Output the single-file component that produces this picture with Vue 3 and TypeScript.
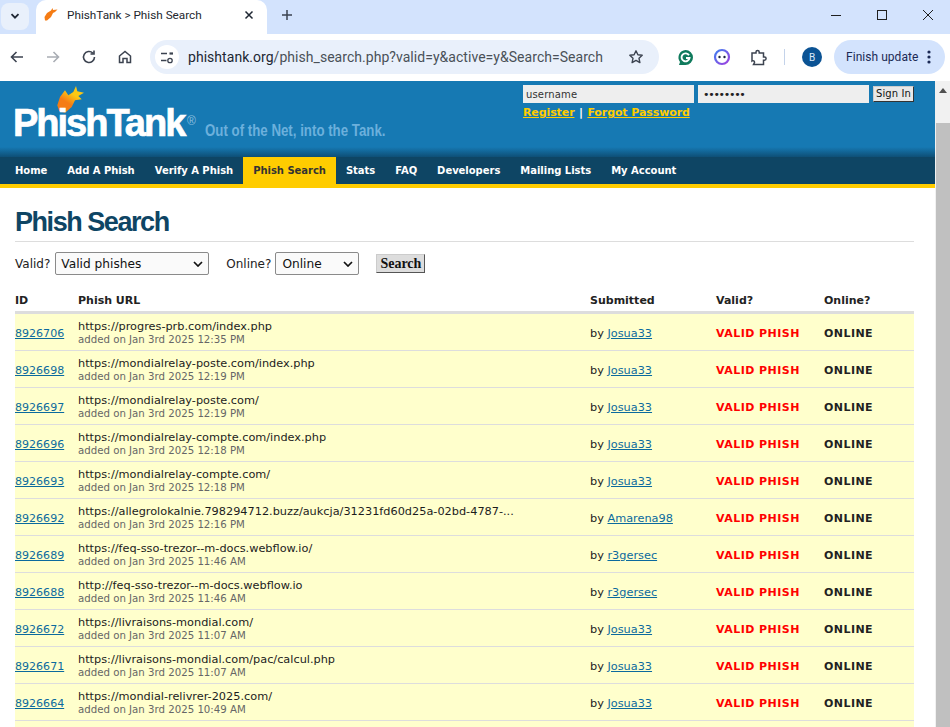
<script setup lang="ts">
interface Row { id: string; url: string; date: string; by: string }
const rows: Row[] = [
  { id: '8926706', url: 'https://progres-prb.com/index.php', date: 'Jan 3rd 2025 12:35 PM', by: 'Josua33' },
  { id: '8926698', url: 'https://mondialrelay-poste.com/index.php', date: 'Jan 3rd 2025 12:19 PM', by: 'Josua33' },
  { id: '8926697', url: 'https://mondialrelay-poste.com/', date: 'Jan 3rd 2025 12:19 PM', by: 'Josua33' },
  { id: '8926696', url: 'https://mondialrelay-compte.com/index.php', date: 'Jan 3rd 2025 12:18 PM', by: 'Josua33' },
  { id: '8926693', url: 'https://mondialrelay-compte.com/', date: 'Jan 3rd 2025 12:18 PM', by: 'Josua33' },
  { id: '8926692', url: 'https://allegrolokalnie.798294712.buzz/aukcja/31231fd60d25a-02bd-4787-...', date: 'Jan 3rd 2025 12:16 PM', by: 'Amarena98' },
  { id: '8926689', url: 'https://feq-sso-trezor--m-docs.webflow.io/', date: 'Jan 3rd 2025 11:46 AM', by: 'r3gersec' },
  { id: '8926688', url: 'http://feq-sso-trezor--m-docs.webflow.io', date: 'Jan 3rd 2025 11:46 AM', by: 'r3gersec' },
  { id: '8926672', url: 'https://livraisons-mondial.com/', date: 'Jan 3rd 2025 11:07 AM', by: 'Josua33' },
  { id: '8926671', url: 'https://livraisons-mondial.com/pac/calcul.php', date: 'Jan 3rd 2025 11:07 AM', by: 'Josua33' },
  { id: '8926664', url: 'https://mondial-relivrer-2025.com/', date: 'Jan 3rd 2025 10:49 AM', by: 'Josua33' }
]
const navItems: string[] = ['Home', 'Add A Phish', 'Verify A Phish', 'Phish Search', 'Stats', 'FAQ', 'Developers', 'Mailing Lists', 'My Account']
</script>

<template>
  <div class="window">
    <div class="tabstrip">
      <div class="tabmenu">
        <svg width="12" height="12" viewBox="0 0 12 12"><path d="M2.500 4.200 6 7.700l3.500-3.500" fill="none" stroke="#1f2733" stroke-width="1.800"/></svg>
      </div>
      <div class="tab">
        <svg class="favicon" width="15" height="15" viewBox="0 0 15 15"><path d="M1 13.500.5 10 3 6l4-2.500L8.500 1 9 3l4.500-.5L11 5 9 6l-2 4-4 3.500z" fill="#f57c14"/></svg>
        <span class="tabtitle">PhishTank &gt; Phish Search</span>
        <svg class="tabclose" width="10" height="10" viewBox="0 0 10 10"><path d="M1.500 1.500l7 7M8.500 1.500l-7 7" stroke="#1f2733" stroke-width="1.500"/></svg>
      </div>
      <svg class="newtab" width="12" height="12" viewBox="0 0 12 12"><path d="M6 1v10M1 6h10" stroke="#3b4350" stroke-width="1.500"/></svg>
      <div class="winctrls">
        <svg width="12" height="12" viewBox="0 0 12 12"><path d="M1 6.500h10" stroke="#1f1f1f" stroke-width="1"/></svg>
        <svg width="12" height="12" viewBox="0 0 12 12"><rect x="1.500" y="1.500" width="9" height="9" fill="none" stroke="#1f1f1f" stroke-width="1"/></svg>
        <svg width="12" height="12" viewBox="0 0 12 12"><path d="M1 1l10 10M11 1 1 11" stroke="#1f1f1f" stroke-width="1"/></svg>
      </div>
    </div>

    <div class="toolbar">
      <svg class="tool" width="16" height="16" viewBox="0 0 16 16"><path d="M14 8H3M7.500 3 2.500 8l5 5" fill="none" stroke="#3c4350" stroke-width="1.600"/></svg>
      <svg class="tool" width="16" height="16" viewBox="0 0 16 16"><path d="M2 8h11M8.500 3l5 5-5 5" fill="none" stroke="#a9adb4" stroke-width="1.600"/></svg>
      <svg class="tool" width="16" height="16" viewBox="0 0 16 16"><path d="M13.500 8A5.500 5.500 0 1 1 11.800 4M13 1.500V5H9.500" fill="none" stroke="#3c4350" stroke-width="1.600"/></svg>
      <svg class="tool" width="16" height="16" viewBox="0 0 16 16"><path d="M2.500 7 8 2.500 13.500 7v6.500h-3.500V9.500H6v4H2.500z" fill="none" stroke="#3c4350" stroke-width="1.500"/></svg>
      <div class="omnibox">
        <span class="tune">
          <svg width="14" height="14" viewBox="0 0 14 14"><path d="M1 3.500h6M1 10.500h5.500" stroke="#3c4350" stroke-width="1.400"/><path d="M9.500 3.500h3.500" stroke="#3c4350" stroke-width="2.200"/><circle cx="10" cy="10.500" r="2.200" fill="none" stroke="#3c4350" stroke-width="1.300"/></svg>
        </span>
        <span class="url"><span class="host">phishtank.org</span>/phish_search.php?valid=y&amp;active=y&amp;Search=Search</span>
        <svg class="star" width="16" height="16" viewBox="0 0 16 16"><path d="M8 1.800l1.900 4 4.300.5-3.200 3 .9 4.300L8 11.400l-3.900 2.200.9-4.300-3.200-3 4.300-.5z" fill="none" stroke="#3c4350" stroke-width="1.400" stroke-linejoin="round"/></svg>
      </div>
      <svg class="ext grammarly" width="17" height="17" viewBox="0 0 17 17"><path d="M8.500 1a7.500 7.500 0 1 1 0 15H2l1-3A7.500 7.500 0 0 1 8.500 1z" fill="#0f7a5c"/><path d="M12 6.300A4 4 0 1 0 12.500 9H9" fill="none" stroke="#fff" stroke-width="1.900"/></svg>
      <svg class="ext monica" width="18" height="18" viewBox="0 0 18 18"><defs><linearGradient id="mg" x1="0" y1="0" x2="1" y2="1"><stop offset="0" stop-color="#3f7ef0"/><stop offset="1" stop-color="#a03fe0"/></linearGradient></defs><circle cx="9" cy="9" r="7" fill="#fff" stroke="url(#mg)" stroke-width="2.200"/><circle cx="6.500" cy="9" r="1.200" fill="#1b2440"/><circle cx="11.500" cy="9" r="1.200" fill="#1b2440"/></svg>
      <svg class="ext puzzle" width="17" height="17" viewBox="0 0 17 17"><path d="M2 4h4V3a1.600 1.600 0 0 1 3.200 0v1h4.300v4h1a1.600 1.600 0 0 1 0 3.200h-1v4.300H3.500l1-2a1.600 1.600 0 0 0-2.500-1.500z" fill="none" stroke="#3c4350" stroke-width="1.500"/></svg>
      <span class="sep"></span>
      <span class="avatar">B</span>
      <div class="update">
        <span>Finish update</span>
        <svg width="4" height="14" viewBox="0 0 4 14"><circle cx="2" cy="2" r="1.600" fill="#1b2a55"/><circle cx="2" cy="7" r="1.600" fill="#1b2a55"/><circle cx="2" cy="12" r="1.600" fill="#1b2a55"/></svg>
      </div>
    </div>

    <div class="viewport">
      <div class="page">
        <header class="banner">
          <div class="logo">
            <svg class="fish" width="28" height="28" viewBox="0 0 28 28">
              <defs><linearGradient id="fg" x1="0.200" y1="0.900" x2="0.700" y2="0.100"><stop offset="0.350" stop-color="#f57c14"/><stop offset="0.750" stop-color="#fcc814"/></linearGradient></defs>
              <path d="M.3 20.300 3 12l5-6.700 3.300 5L16.300 7 19 1l1.300 5.300L27 7.700 21.300 11l3.400 3.300-6.700 1-3.300 6.700L8 27.700l-5.700-1.400z" fill="url(#fg)"/>
            </svg>
            <span class="wordmark">PhishTank</span><span class="reg">®</span>
            <span class="tagline">Out of the Net, into the Tank.</span>
          </div>
          <div class="login">
            <div class="loginrow">
              <span class="field">username</span>
              <span class="field dots">••••••••</span>
              <span class="signin">Sign In</span>
            </div>
            <div class="loginlinks"><a>Register</a><span class="pipe">|</span><a>Forgot Password</a></div>
          </div>
        </header>
        <nav class="nav">
          <span v-for="n in navItems" :key="n" class="navitem" :class="{ active: n === 'Phish Search' }">{{ n }}</span>
        </nav>
        <main class="content">
          <h1>Phish Search</h1>
          <div class="filters">
            <label class="flabel">Valid?</label>
            <span class="select sel1"><span class="seltext">Valid phishes</span><svg width="10" height="6" viewBox="0 0 10 6"><path d="M1 1l4 4 4-4" fill="none" stroke="#111" stroke-width="1.700"/></svg></span>
            <label class="flabel second">Online?</label>
            <span class="select sel2"><span class="seltext">Online</span><svg width="10" height="6" viewBox="0 0 10 6"><path d="M1 1l4 4 4-4" fill="none" stroke="#111" stroke-width="1.700"/></svg></span>
            <span class="searchbtn">Search</span>
          </div>
          <div class="thead grid">
            <span>ID</span><span>Phish URL</span><span>Submitted</span><span>Valid?</span><span>Online?</span>
          </div>
          <div v-for="r in rows" :key="r.id" class="row grid">
            <a class="idlink">{{ r.id }}</a>
            <div class="urlcell">
              <div class="rowurl">{{ r.url }}</div>
              <div class="added">added on {{ r.date }}</div>
            </div>
            <span class="by">by <a>{{ r.by }}</a></span>
            <span class="valid">VALID PHISH</span>
            <span class="online">ONLINE</span>
          </div>
          <div class="row grid"></div>
        </main>
      </div>
      <div class="scrollbar">
        <svg class="arrow" width="8" height="5" viewBox="0 0 8 5"><path d="M4 0l4 5H0z" fill="#505050"/></svg>
        <div class="thumb"></div>
      </div>
    </div>
  </div>
</template>

<style>
html, body { margin: 0; padding: 0; background: #fff; overflow: hidden; }
</style>

<style scoped>
.window { width: 950px; height: 727px; overflow: hidden; display: flex; flex-direction: column; font-family: "DejaVu Sans", sans-serif; }
.tabstrip { height: 34px; background: #d3e3fd; display: flex; align-items: center; position: relative; flex: none; padding-bottom: 5px; box-sizing: border-box; }
.tabmenu { width: 28px; height: 27px; margin: 3px 0 0 1px; background: #e9f0fb; border-radius: 8px; display: flex; align-items: center; justify-content: center; flex: none; }
.tab { width: 231px; height: 34px; margin: 0 0 -5px 7px; background: #fff; border-radius: 10px 10px 0 0; display: flex; align-items: center; box-sizing: border-box; padding: 0 0 5px 8px; align-self: flex-end; flex: none; }
.favicon { flex: none; }
.tabtitle { font: 11.750px Roboto, "Open Sans", sans-serif; color: #23272e; margin-left: 8px; flex: 1; }
.tabclose { margin-right: 13px; }
.newtab { margin-left: 14px; }
.winctrls { margin-left: auto; display: flex; gap: 34px; padding-right: 16px; }
.toolbar { height: 47px; background: #fff; display: flex; align-items: center; flex: none; border-radius: 0 8px 0 0; box-sizing: border-box; padding: 0 0 1px 9px; position: relative; }
.tool { margin-right: 20px; flex: none; }
.tool:nth-child(4) { margin-right: 18px; }
.omnibox { width: 509px; height: 34px; background: #e9f0fb; border-radius: 17px; display: flex; align-items: center; box-sizing: border-box; padding: 0 16px 0 5px; flex: none; margin-left: -1px; }
.tune { width: 24px; height: 24px; border-radius: 50%; background: #fff; display: flex; align-items: center; justify-content: center; flex: none; }
.url { font: 14px Roboto, "Open Sans", sans-serif; color: #4a5058; margin-left: 9px; white-space: nowrap; flex: 1; letter-spacing: 0.04px; }
.host { color: #1c2733; }
.star { flex: none; margin-right: -1px; }
.ext { margin-left: 18px; flex: none; }
.grammarly { margin-left: 18px; }
.monica { margin-left: 19px; }
.puzzle { margin-left: 19px; }
.sep { width: 1px; height: 16px; background: #c4d3ea; margin-left: 17px; flex: none; }
.avatar { width: 20px; height: 20px; border-radius: 50%; background: #0b5394; color: #dce8f8; font: 10px Roboto, sans-serif; display: flex; align-items: center; justify-content: center; margin-left: 17px; flex: none; }
.update { margin-left: 12px; width: 111px; height: 34px; background: #d3e3fd; border-radius: 17px; display: flex; align-items: center; box-sizing: border-box; padding-left: 12px; font: 12px Roboto, sans-serif; color: #1b2a55; flex: none; justify-content: flex-start; gap: 9px; letter-spacing: 0.04px; }
.viewport { flex: 1; display: flex; min-height: 0; }
.page { width: 935px; flex: none; overflow: hidden; }
.banner { height: 76px; background: linear-gradient(#1679b3 0, #1679b3 66px, #0e4f76 76px); display: flex; position: relative; }
.logo { width: 523px; flex: none; position: relative; }
.fish { position: absolute; left: 57px; top: 4px; }
.wordmark { position: absolute; left: 13px; top: 20px; font: bold 38px/44px "Liberation Sans", sans-serif; color: #fff; letter-spacing: -2px; -webkit-text-stroke: 0.7px #fff; }
.reg { position: absolute; left: 187px; top: 33px; font: 12px "Liberation Sans", sans-serif; color: #8cbfdf; }
.tagline { position: absolute; left: 205px; top: 40px; font: bold 16px/20px "Liberation Sans", sans-serif; color: #6cb0dc; white-space: nowrap; transform: scaleX(0.83); transform-origin: left center; }
.login { padding-top: 4px; }
.loginrow { display: flex; align-items: center; gap: 4px; }
.field { width: 171px; height: 18px; background: #eeeeee; font: 10px/20px "DejaVu Sans", sans-serif; color: #333; padding-left: 3px; box-sizing: border-box; letter-spacing: 0.15px; }
.dots { letter-spacing: -1.300px; font-size: 11px; color: #222; padding-left: 5px; }
.signin { background: #e8e8e8; border: 1px solid #ccc; border-right-color: #333; border-bottom-color: #333; font: 10px/14px "DejaVu Sans", sans-serif; color: #111; padding: 0 2px; letter-spacing: 0.1px; }
.loginlinks { font: bold 11px/14px "DejaVu Sans", sans-serif; color: #fc0; margin-top: 3px; letter-spacing: -0.1px; }
.loginlinks a { text-decoration: underline; }
.pipe { margin: 0 4.500px; color: #fff; }
.nav { height: 27px; background: #0e4564; border-bottom: 4px solid #fc0; display: flex; padding-left: 5px; }
.navitem { font: bold 10px/27px "DejaVu Sans", sans-serif; color: #fff; padding: 0 10px; letter-spacing: -0.03px; }
.navitem.active { background: #fc0; color: #333; }
.content { padding: 0 21px 0 15px; }
h1 { margin: 0; padding-top: 19px; height: 34px; border-bottom: 1px solid #ddd; font: bold 27px/30px "Liberation Sans", sans-serif; letter-spacing: -1.450px; color: #0e4564; width: 899px; box-sizing: content-box; }
.filters { display: flex; align-items: center; height: 23px; margin-top: 10px; font: 12px "DejaVu Sans", sans-serif; color: #222; }
.flabel.second { margin-left: 17px; }
.select { height: 23px; box-sizing: border-box; border: 1px solid #8a8a8a; border-radius: 2px; background: #fafafa; font: 12.200px/21px "DejaVu Sans", sans-serif; color: #111; display: flex; align-items: center; justify-content: space-between; padding: 0 5px; margin-left: 5px; }
.seltext { position: relative; top: 1px; }
.select.sel1 { width: 154px; }
.select.sel2 { width: 84px; margin-left: 4px; padding-left: 6px; }
.searchbtn { margin-left: 17px; width: 49px; height: 19px; box-sizing: border-box; background: #ddd; border: 1px solid #ccc; border-right-color: #555; border-bottom-color: #555; font: bold 14px/17px "Liberation Serif", "DejaVu Serif", serif; color: #111; text-align: center; }
.grid { display: grid; grid-template-columns: 63px 512px 126px 108px 90px; width: 899px; align-items: center; font-size: 11.300px; }
.thead { margin-top: 14px; padding-top: 1px; height: 21px; border-bottom: 3px solid #ddd; font-weight: bold; color: #222; font-size: 11px; }
.row { height: 34px; padding-top: 2px; background: #ffc; border-bottom: 1px solid #ddd; color: #222; }
.idlink, .by a { color: #0b6a9e; text-decoration: underline; }
.idlink { font-size: 11.050px; }
.urlcell { line-height: 13px; }
.rowurl { color: #1c1c1c; }
.added { font-size: 10.200px; color: #666; }
.valid { color: #f00; font-weight: bold; font-size: 11px; letter-spacing: 0.45px; }
.online { font-weight: bold; color: #222; font-size: 11px; letter-spacing: 0.45px; }
.scrollbar { width: 15px; flex: none; background: #f1f1f1; display: flex; flex-direction: column; align-items: center; padding-top: 7px; box-sizing: border-box; }
.arrow { flex: none; }
.thumb { margin-top: 30px; width: 14px; margin-left: 1px; flex: 1; background: #c0c0c0; }
</style>
